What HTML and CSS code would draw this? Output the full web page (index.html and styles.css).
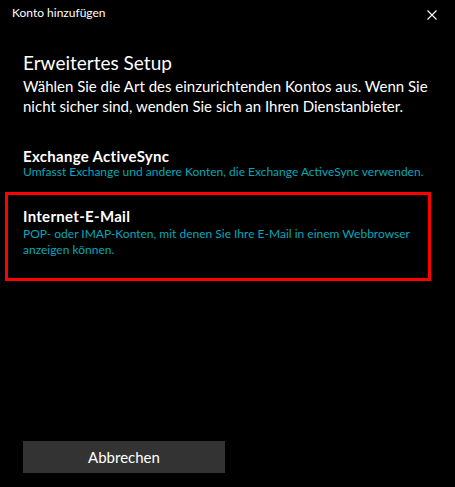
FILE: index.html
```html
<!DOCTYPE html>
<html lang="de">
<head>
<meta charset="utf-8">
<title>Konto hinzufügen</title>
<link rel="stylesheet" href="styles.css">
</head>
<body>
<div class="window">
  <header class="titlebar">
    <span class="title">Konto hinzufügen</span>
    <svg class="close" width="10" height="10" viewBox="0 0 10 10" aria-hidden="true">
      <path d="M0.5 0.5 L9.5 9.5 M9.5 0.5 L0.5 9.5" stroke="#fff" stroke-width="1.1" fill="none"/>
    </svg>
  </header>
  <main class="content">
    <h1 class="heading">Erweitertes Setup</h1>
    <p class="intro">Wählen Sie die Art des einzurichtenden Kontos aus. Wenn Sie nicht sicher sind, wenden Sie sich an Ihren Dienstanbieter.</p>
    <div class="options">
      <div class="option">
        <div class="option-title">Exchange ActiveSync</div>
        <div class="option-desc">Umfasst Exchange und andere Konten, die Exchange ActiveSync verwenden.</div>
      </div>
      <div class="option option-highlight">
        <div class="option-title">Internet-E-Mail</div>
        <div class="option-desc">POP- oder IMAP-Konten, mit denen Sie Ihre E-Mail in einem Webbrowser anzeigen können.</div>
      </div>
    </div>
    <div class="actions">
      <button class="btn" type="button">Abbrechen</button>
    </div>
  </main>
</div>
</body>
</html>
```
FILE: styles.css
```css
html, body {
  margin: 0;
  padding: 0;
  background: #000;
}
body {
  font-family: "Lato", "Open Sans", sans-serif;
  color: #fff;
}
.window {
  width: 455px;
  height: 487px;
  display: flex;
  flex-direction: column;
  box-sizing: border-box;
}
.titlebar {
  display: flex;
  justify-content: space-between;
  align-items: flex-start;
  padding: 5px 18px 0 12px;
  height: 25px;
}
.title {
  font-size: 12px;
  line-height: 16px;
}
.close {
  margin-top: 5px;
  display: block;
}
.content {
  flex: 1;
  display: flex;
  flex-direction: column;
  padding: 0 24px 14px 23px;
}
.heading {
  margin: 20px 0 0;
  font-size: 19px;
  font-weight: 400;
  line-height: 26px;
}
.intro {
  margin: 0;
  font-size: 15px;
  line-height: 20px;
}
.options {
  margin-top: 32px;
  display: flex;
  flex-direction: column;
}
.option-title {
  font-size: 15px;
  font-weight: 700;
  line-height: 16px;
  letter-spacing: 0.3px;
}
.option-desc {
  font-size: 12px;
  line-height: 16px;
  color: #06a7b9;
}
.option-highlight {
  margin: 12px 0 0 -18px;
  border: 3px solid #ff0000;
  padding: 13px 10px 20px 15px;
}
.option-highlight .option-desc {
  margin-top: 2px;
}
.actions {
  margin-top: auto;
}
.btn {
  width: 202px;
  height: 32px;
  background: #333;
  color: #fff;
  border: none;
  font-family: inherit;
  font-size: 15px;
  padding: 0;
}
```
